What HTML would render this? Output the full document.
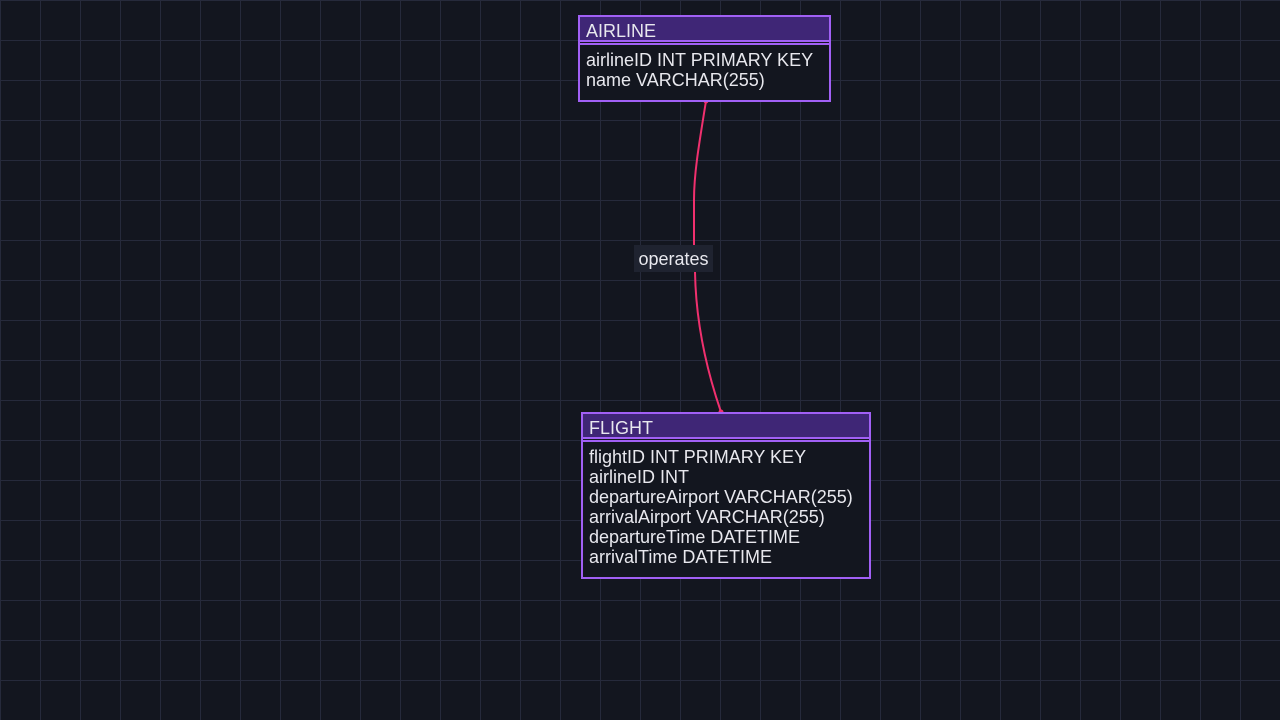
<!DOCTYPE html>
<html><head><meta charset="utf-8"><style>
html,body{margin:0;padding:0;width:1280px;height:720px;overflow:hidden;background:#13161f;
background-image:linear-gradient(#262a3b 1px,transparent 1px),linear-gradient(90deg,#262a3b 1px,transparent 1px);
background-size:40px 40px;background-position:0 0;font-family:"Liberation Sans",sans-serif;}
.box{position:absolute;border:2px solid #a160f5;background:#13161f;box-sizing:border-box;color:#e8e8ee;font-size:18px;}
.hd{background:#3f2676;height:23px;line-height:28px;padding-left:6px;border-bottom:2px solid #a160f5;}
.sep{height:1px;border-bottom:2px solid #a160f5;}
.bd{padding:5px 6px;line-height:20px;}
.lbl{position:absolute;left:634px;top:245px;width:79px;height:27px;background:#1f2330;color:#e8e8ee;font-size:18px;line-height:29px;text-align:center;}
</style></head><body>
<svg width="1280" height="720" style="position:absolute;left:0;top:0">
<path d="M706 101 C698 150 694 175 694 200 L694 245 M695 272 C696 330 710 380 721 412" stroke="#f0306e" stroke-width="2" fill="none"/>
<circle cx="706" cy="101" r="2.5" fill="#f0306e"/><circle cx="721" cy="412" r="2.5" fill="#f0306e"/>
</svg>
<div class="box" style="left:578px;top:15px;width:253px;height:87px">
<div class="hd">AIRLINE</div><div class="sep"></div>
<div class="bd">airlineID INT PRIMARY KEY<br>name VARCHAR(255)</div></div>
<div class="box" style="left:581px;top:412px;width:290px;height:167px">
<div class="hd">FLIGHT</div><div class="sep"></div>
<div class="bd">flightID INT PRIMARY KEY<br>airlineID INT<br>departureAirport VARCHAR(255)<br>arrivalAirport VARCHAR(255)<br>departureTime DATETIME<br>arrivalTime DATETIME</div></div>
<div class="lbl">operates</div>
</body></html>
